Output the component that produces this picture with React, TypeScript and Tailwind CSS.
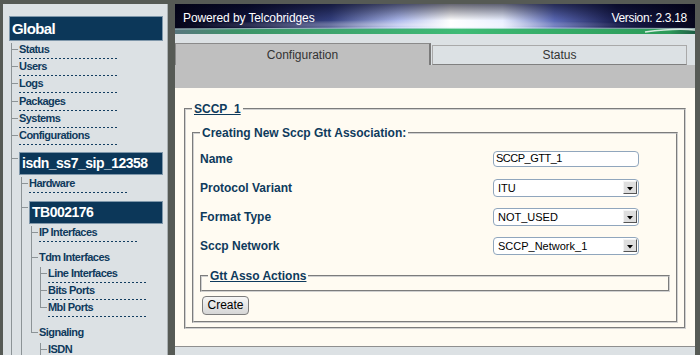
import React from 'react';
import { clsx } from 'clsx';

const SANS = "font-['Liberation_Sans',Arial,sans-serif]";

function Dash() {
  return <div className="mt-[2px] h-px w-[98px] bg-[repeating-linear-gradient(to_right,#123d60_0_2px,transparent_2px_4px)]" />;
}

function Branch({ last, className, children }: { last?: boolean; className?: string; children: React.ReactNode }) {
  return (
    <div className={clsx('flex items-start', !last && 'border-l border-[#8c9396]', className)}>
      <span
        className={
          last
            ? 'h-[7px] w-[7px] shrink-0 border-b border-l border-[#8c9396]'
            : 'h-[7px] w-[6px] shrink-0 border-b border-[#8c9396]'
        }
      />
      <div className="ml-[1px] min-w-0 flex-1">{children}</div>
    </div>
  );
}

function Leaf({ label, last, pb = 'pb-[1.2px]' }: { label: string; last?: boolean; pb?: string }) {
  return (
    <Branch last={last} className={pb}>
      <div className="leading-[13px]">{label}</div>
      <Dash />
    </Branch>
  );
}

function Box({ children, big }: { children: React.ReactNode; big?: boolean }) {
  return (
    <div
      className={clsx(
        'border border-[#7f97aa] bg-[#0c3759] pl-[2px] font-bold text-white',
        big ? 'h-[25px] text-[15px] leading-[23px] tracking-[-0.6px]' : 'h-[23px] text-[14px] leading-[21px] tracking-[-0.5px]'
      )}
    >
      {children}
    </div>
  );
}

function Sidebar() {
  return (
    <aside
      className={clsx(
        'w-[165px] shrink-0 border-r border-[#aab0b3] bg-[#dce1e4] pl-[6px] pr-[4px] pt-[12px] text-[11px] font-bold tracking-[-0.55px] text-[#0f3a5c]',
        SANS
      )}
    >
      <Box big>Global</Box>
      <div className="ml-[2px] pt-[2px]">
        <Leaf label="Status" />
        <Leaf label="Users" />
        <Leaf label="Logs" />
        <Leaf label="Packages" />
        <Leaf label="Systems" />
        <Leaf label="Configurations" pb="pb-[7.5px]" />
        <Branch>
          <Box>isdn_ss7_sip_12358</Box>
          <div className="ml-[2px] pt-[1.5px]">
            <Leaf label="Hardware" pb="pb-[8.5px]" />
            <Branch>
              <Box>TB002176</Box>
              <div className="ml-[2px] pt-[1.5px]">
                <Leaf label="IP Interfaces" pb="pb-[9px]" />
                <Branch className="pb-[7.4px]">
                  <div className="pb-[3px] leading-[13px]">Tdm Interfaces</div>
                  <div className="ml-[1px]">
                    <Leaf label="Line Interfaces" />
                    <Leaf label="Bits Ports" />
                    <Leaf label="Mbl Ports" last />
                  </div>
                </Branch>
                <Branch last>
                  <div className="pb-[4px] leading-[13px]">Signaling</div>
                  <div className="ml-[1px]">
                    <Leaf label="ISDN" pb="pb-[24px]" />
                  </div>
                </Branch>
              </div>
            </Branch>
          </div>
        </Branch>
      </div>
    </aside>
  );
}

function Banner() {
  return (
    <div className="relative h-[30px] overflow-hidden bg-[#0a0a22]">
      <svg className="absolute inset-0" width="520" height="30" viewBox="0 0 520 30">
        <defs>
          <linearGradient id="bgH" x1="0" x2="1" y1="0" y2="0">
            <stop offset="0" stopColor="#06061a" />
            <stop offset="0.14" stopColor="#10143a" />
            <stop offset="0.3" stopColor="#34407e" />
            <stop offset="0.43" stopColor="#aab6ea" />
            <stop offset="0.53" stopColor="#ffffff" />
            <stop offset="0.63" stopColor="#e8eeff" />
            <stop offset="0.73" stopColor="#5a68b4" />
            <stop offset="0.85" stopColor="#181c4c" />
            <stop offset="1" stopColor="#07071c" />
          </linearGradient>
          <linearGradient id="shade" x1="0" x2="0" y1="0" y2="1">
            <stop offset="0" stopColor="#000014" stopOpacity="0.6" />
            <stop offset="0.55" stopColor="#000014" stopOpacity="0" />
          </linearGradient>
          <linearGradient id="green" x1="0" x2="1" y1="0" y2="0">
            <stop offset="0" stopColor="#58767e" />
            <stop offset="0.12" stopColor="#3c9468" />
            <stop offset="0.55" stopColor="#3fbb76" />
            <stop offset="0.95" stopColor="#2b9a58" />
            <stop offset="1" stopColor="#1f5c44" />
          </linearGradient>
          <radialGradient id="streak" cx="0.5" cy="0.5" r="0.5">
            <stop offset="0" stopColor="#ffffff" stopOpacity="0.8" />
            <stop offset="1" stopColor="#ffffff" stopOpacity="0" />
          </radialGradient>
        </defs>
        <rect width="520" height="30" fill="url(#bgH)" />
        <rect width="520" height="30" fill="url(#shade)" />
        <ellipse cx="240" cy="21" rx="230" ry="5" fill="url(#streak)" opacity="0.55" />
        <rect y="24.5" width="520" height="5.5" fill="url(#green)" />
        <path d="M0 25 Q260 22.5 520 24.5" stroke="#e8f4ff" strokeWidth="1" fill="none" opacity="0.6" />
        <path d="M470 28 Q500 24 520 26" stroke="#ffffff" strokeWidth="1.5" fill="none" opacity="0.8" />
      </svg>
      <div className={clsx('relative flex h-[30px] items-center justify-between pl-[8px] pr-[8px] pb-[2px] text-[12px] text-white', SANS)}>
        <span className="tracking-[-0.1px]">Powered by Telcobridges</span>
        <span className="tracking-[-0.3px]">Version: 2.3.18</span>
      </div>
    </div>
  );
}

function SelectBox({ value }: { value: string }) {
  return (
    <div className="flex h-[18px] w-[146px] items-center rounded-[4px] border border-[#90a6bd] bg-white pl-[4px] pr-[1px]">
      <span className="flex-1 text-[11px] leading-[16px] text-black">{value}</span>
      <span className="flex h-[13px] w-[14px] items-center justify-center border border-b-[#555] border-r-[#555] border-l-[#f4f4f4] border-t-[#f4f4f4] bg-[#dedede]">
        <svg width="6" height="4" viewBox="0 0 6 4" className="mt-[2px]">
          <path d="M0 0 H6 L3 3.5 Z" fill="#000" />
        </svg>
      </span>
    </div>
  );
}

function Row({ label, children }: { label: string; children: React.ReactNode }) {
  return (
    <div className="grid h-[29px] grid-cols-[293px_146px] items-center">
      <span className="text-[12px] font-bold text-[#0e3a5c]">{label}</span>
      {children}
    </div>
  );
}

const fieldset = 'border-2 [border-style:groove] border-[#d0d0d0] px-[6px]';
const legend = 'px-[2px] text-[12px] font-bold leading-[14px] text-[#0e3a5c]';

function Content() {
  return (
    <div className={clsx('h-[259px] border-b border-[#8f8f8f] bg-[#fffbf2] px-[9px] pt-[14px]', SANS)}>
      <fieldset className={clsx(fieldset, 'pt-[10px] pb-[4px]')}>
        <legend className={clsx(legend, 'underline')}>SCCP_1</legend>
        <fieldset className={clsx(fieldset, 'pt-[4px] pb-[5px]')}>
          <legend className={legend}>Creating New Sccp Gtt Association:</legend>
          <Row label="Name">
            <div className="flex h-[16px] w-[146px] items-center rounded-[4px] border border-[#90a6bd] bg-white pl-[2px] text-[11px] tracking-[-0.5px] text-black">
              SCCP_GTT_1
            </div>
          </Row>
          <Row label="Protocol Variant">
            <SelectBox value="ITU" />
          </Row>
          <Row label="Format Type">
            <SelectBox value="NOT_USED" />
          </Row>
          <Row label="Sccp Network">
            <SelectBox value="SCCP_Network_1" />
          </Row>
          <fieldset className={clsx(fieldset, 'mt-[9px] pt-0 pb-[7px]')}>
            <legend className={clsx(legend, 'underline')}>Gtt Asso Actions</legend>
          </fieldset>
          <button className="ml-[2px] mt-[3px] h-[19px] w-[47px] rounded-[4px] border border-[#7c7c7c] bg-[linear-gradient(#f6f6f6,#d6d6d6)] text-[12px] leading-[17px] text-black">
            Create
          </button>
        </fieldset>
      </fieldset>
    </div>
  );
}

export default function App() {
  return (
    <div className="flex h-[355px] w-[700px] gap-[7px] overflow-hidden bg-[#565a55] pl-[3px] pt-[4px]">
      <Sidebar />
      <main className="flex w-[520px] shrink-0 flex-col">
        <Banner />
        <div className="h-[9px] bg-[#dce1e4]" />
        <div className={clsx('flex h-[22px] items-end bg-[#dce1e4] text-[12px] text-[#333]', SANS)}>
          <div className="flex h-[22px] w-[256px] items-center justify-center border-l border-t border-[#8a8a8a] border-r-2 border-r-[#7a7a7a] bg-[#bfbfbf]">
            Configuration
          </div>
          <div className="ml-[1px] flex h-[20px] w-[255px] items-center justify-center border border-[#a9a9a9] border-b-[#808080] bg-[#dce1e4]">
            Status
          </div>
        </div>
        <div className="h-[23px] bg-[#bfbfbf]" />
        <Content />
        <div className="flex-1 bg-[#dce1e4]" />
      </main>
    </div>
  );
}
